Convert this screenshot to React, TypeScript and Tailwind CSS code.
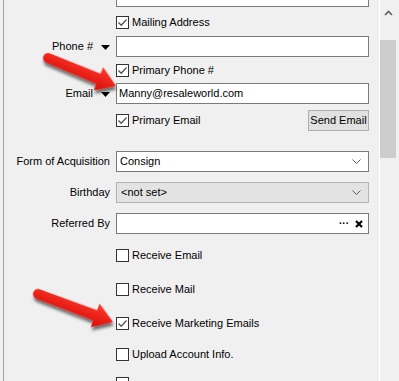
import { type ReactNode } from "react";

const FONT = { fontFamily: '"Liberation Sans", Arial, sans-serif' };

function Box({ checked = false }: { checked?: boolean }) {
  return (
    <div className="flex h-[13px] w-[13px] shrink-0 items-center justify-center border border-[#333333] bg-white">
      {checked && (
        <svg width="11" height="11" viewBox="0 0 11 11">
          <path d="M1.5 5.5 L4.2 8.3 L9.5 2.5" fill="none" stroke="#555555" strokeWidth="1.3" />
        </svg>
      )}
    </div>
  );
}

function CheckRow({
  label,
  checked = false,
  mt,
  children,
}: {
  label: string;
  checked?: boolean;
  mt: string;
  children?: ReactNode;
}) {
  return (
    <div className={`flex h-[13px] items-center pl-[112px] ${mt}`}>
      <Box checked={checked} />
      <span className="ml-[3px] text-[11px] leading-none text-black">{label}</span>
      {children}
    </div>
  );
}

function Triangle() {
  return (
    <svg width="9" height="5" viewBox="0 0 9 5" className="ml-[8px] mt-[2px]">
      <polygon points="0,0 9,0 4.5,5" fill="#000" />
    </svg>
  );
}

function Chevron() {
  return (
    <svg width="9" height="5" viewBox="0 0 9 5" className="mr-[4px]">
      <path d="M0.5 0.5 L4.5 4.5 L8.5 0.5" fill="none" stroke="#5a5a5a" strokeWidth="1" />
    </svg>
  );
}

function FieldRow({
  label,
  mt,
  drop = false,
  children,
}: {
  label: string;
  mt: string;
  drop?: boolean;
  children: ReactNode;
}) {
  return (
    <div className={`flex h-[21px] items-center ${mt}`}>
      <div className="flex w-[106px] items-center justify-end text-[11px] text-black">
        <span>{label}</span>
        {drop && <Triangle />}
      </div>
      <div className="ml-[6px] h-[21px] w-[253px]">{children}</div>
    </div>
  );
}

function TextBox({ value = "" }: { value?: string }) {
  return (
    <div className="flex h-full w-full items-center border border-[#7a7a7a] bg-white px-[2px] text-[11px] text-black">
      {value}
    </div>
  );
}

function Select({ value, disabled = false }: { value: string; disabled?: boolean }) {
  return (
    <div
      className={`flex h-full w-full items-center justify-between border px-[3px] text-[11px] text-black ${
        disabled ? "border-[#b4b4b4] bg-[#e3e3e3]" : "border-[#7a7a7a] bg-white"
      }`}
    >
      <span className={disabled ? "pl-[1px]" : ""}>{value}</span>
      <Chevron />
    </div>
  );
}

// big red callout arrow, tail -> tip
function Arrow({ x1, y1, x2, y2 }: { x1: number; y1: number; x2: number; y2: number }) {
  const len = Math.hypot(x2 - x1, y2 - y1);
  const ang = (Math.atan2(y2 - y1, x2 - x1) * 180) / Math.PI;
  const h = len - 19;
  const d = `M0,-5 L${h},-5.5 L${h},-12.5 L${len},0 L${h},12.5 L${h},5.5 L0,5 A5,5 0 0 1 0,-5 Z`;
  return (
    <g transform={`translate(${x1} ${y1}) rotate(${ang})`} filter="url(#shadow)">
      <path d={d} fill="url(#red)" />
    </g>
  );
}

export default function App() {
  return (
    <div className="relative flex h-[381px] w-[399px] overflow-hidden bg-[#f0f0f0]" style={FONT}>
      <div className="w-[379px] pl-[3px]">
        <div className="flex h-full flex-col border-l border-[#a0a0a0]">
          <FieldRow label="" mt="mt-[-14px]">
            <TextBox />
          </FieldRow>
          <CheckRow label="Mailing Address" mt="mt-[9px]" checked />
          <FieldRow label="Phone #" mt="mt-[7px]" drop>
            <TextBox />
          </FieldRow>
          <CheckRow label="Primary Phone #" mt="mt-[7px]" checked />
          <FieldRow label="Email" mt="mt-[6px]" drop>
            <TextBox value="Manny@resaleworld.com" />
          </FieldRow>
          <div className="mt-[6px] flex h-[21px] w-[365px] items-center pl-[112px]">
            <Box checked />
            <span className="ml-[3px] text-[11px] text-black">Primary Email</span>
            <button className="ml-auto h-[21px] w-[61px] border border-[#adadad] bg-[#e1e1e1] text-[11px] text-black">
              Send Email
            </button>
          </div>
          <div className="ml-[5px] mt-[6px] h-px bg-[#a0a0a0]" />
          <FieldRow label="Form of Acquisition" mt="mt-[14px]">
            <Select value="Consign" />
          </FieldRow>
          <FieldRow label="Birthday" mt="mt-[10px]">
            <Select value="<not set>" disabled />
          </FieldRow>
          <FieldRow label="Referred By" mt="mt-[10px]">
            <div className="flex h-full w-full items-center justify-end border border-[#7a7a7a] bg-white pr-[5px]">
              <span className="mr-[6px] mt-[1px] text-[10px] font-bold leading-none text-black">···</span>
              <svg width="8" height="8" viewBox="0 0 8 8">
                <path d="M1 1 L7 7 M7 1 L1 7" stroke="#000" strokeWidth="2.2" />
              </svg>
            </div>
          </FieldRow>
          <CheckRow label="Receive Email" mt="mt-[15px]" />
          <CheckRow label="Receive Mail" mt="mt-[21px]" />
          <CheckRow label="Receive Marketing Emails" mt="mt-[21px]" checked />
          <CheckRow label="Upload Account Info." mt="mt-[18px]" />
          <CheckRow label="" mt="mt-[16px]" />
        </div>
      </div>
      <div className="w-[20px] border-l border-white pt-[5px]">
        <div className="flex h-[35px] justify-center pt-[5px]">
          <svg width="9" height="6" viewBox="0 0 9 6" className="ml-[-3px]">
            <path d="M1 5 L4.5 1.5 L8 5" fill="none" stroke="#606060" strokeWidth="1.6" />
          </svg>
        </div>
        <div className="h-[118px] w-[16px] bg-[#cdcdcd]" />
      </div>
      <svg className="pointer-events-none absolute left-0 top-0" width="399" height="381">
        <defs>
          <linearGradient id="red" x1="0" y1="0" x2="0" y2="1">
            <stop offset="0" stopColor="#ff3a2e" />
            <stop offset="1" stopColor="#d80b05" />
          </linearGradient>
          <filter id="shadow" x="-20%" y="-50%" width="140%" height="200%">
            <feDropShadow dx="2" dy="3" stdDeviation="1.6" floodColor="#000" floodOpacity="0.55" />
          </filter>
        </defs>
        <Arrow x1={48} y1={58} x2={116} y2={86} />
        <Arrow x1={38} y1={294} x2={113} y2={322} />
      </svg>
    </div>
  );
}
